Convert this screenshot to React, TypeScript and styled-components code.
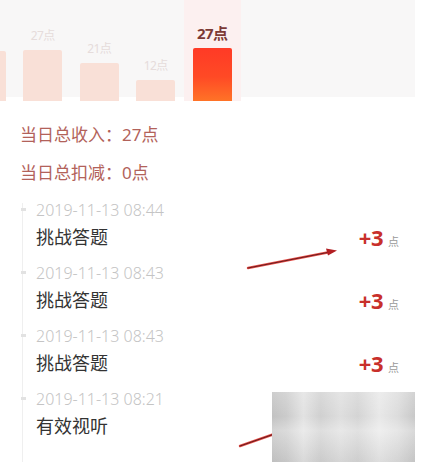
import React from 'react';
import styled, { createGlobalStyle } from 'styled-components';

const GlobalStyle = createGlobalStyle`
  body {
    margin: 0;
    background: #fff;
    font-family: 'Noto Sans', 'Noto Sans CJK SC', sans-serif;
  }
`;

const Page = styled.div`
  position: relative;
  width: 422px;
  height: 462px;
  overflow: hidden;
  background: #fff;
`;

const Chart = styled.div`
  display: flex;
  align-items: stretch;
  width: 457px;
  height: 101px;
  margin-left: -42px;
  background: linear-gradient(#f8f7f7 97px, #fff 97px);
`;

const Column = styled.div<{ $active?: boolean }>`
  width: 56.5px;
  flex: none;
  display: flex;
  flex-direction: column;
  align-items: center;
  justify-content: flex-end;
  background: ${(p) => (p.$active ? '#fcf0f0' : 'transparent')};
`;

const BarLabel = styled.div<{ $active?: boolean }>`
  font-size: ${(p) => (p.$active ? '15px' : '12px')};
  font-weight: ${(p) => (p.$active ? 700 : 400)};
  line-height: 16px;
  color: ${(p) => (p.$active ? '#7c3a36' : '#e6dcdb')};
  margin-bottom: ${(p) => (p.$active ? '7px' : '6px')};
  letter-spacing: -0.5px;
`;

const Bar = styled.div<{ $active?: boolean }>`
  width: 39px;
  border-radius: 2px 2px 0 0;
  background: ${(p) =>
    p.$active ? 'linear-gradient(#ff3a26, #ff4a25 55%, #ff7327)' : '#f9e0d7'};
`;

const Summary = styled.div`
  display: flex;
  flex-direction: column;
  gap: 15px;
  padding: 22px 0 0 20px;
`;

const SummaryLine = styled.div`
  font-size: 17px;
  line-height: 23px;
  color: #b2625a;
`;

const Timeline = styled.div`
  margin: 19px 0 0 22px;
  border-left: 1px solid #efefef;
  height: 260px;
`;

const Entry = styled.div`
  position: relative;
  display: flex;
  align-items: flex-start;
  justify-content: space-between;
  height: 63px;
  padding: 0 23px 0 13px;
  box-sizing: border-box;

  &::before {
    content: '';
    position: absolute;
    left: -2px;
    top: 5px;
    width: 5px;
    height: 3px;
    background: #e2e2e2;
  }
`;

const EntryText = styled.div`
  display: flex;
  flex-direction: column;
`;

const Stamp = styled.div`
  font-size: 16px;
  line-height: 18px;
  font-weight: 300;
  color: #c4c4c4;
  margin-top: -2px;
`;

const Title = styled.div`
  font-size: 18px;
  line-height: 24px;
  color: #333;
  margin-top: 6px;
`;

const Points = styled.div`
  display: flex;
  align-items: baseline;
  margin-top: 20px;
  line-height: 28px;
`;

const PointValue = styled.span`
  font-size: 22px;
  font-weight: 700;
  color: #c8302b;
  letter-spacing: -0.5px;
`;

const PointUnit = styled.span`
  font-size: 11px;
  color: #9a9a9a;
  margin-left: 5px;
`;

const Annotations = styled.svg`
  position: absolute;
  left: 0;
  top: 0;
  pointer-events: none;
`;

const Blur = styled.div`
  position: absolute;
  left: 272px;
  top: 392px;
  width: 143px;
  height: 70px;
  background:
    linear-gradient(180deg, rgba(255,255,255,0.2), rgba(255,255,255,0) 35%, rgba(255,255,255,0.3) 55%, rgba(180,180,180,0.2)),
    linear-gradient(90deg, #c2c2c2 0%, #cbcbcb 10%, #e2e2e2 22%, #d0d0d0 34%, #dedede 48%, #d4d4d4 60%, #e8e8e8 75%, #dcdcdc 88%, #c8c8c8 100%);
`;

const bars = [
  { label: '', h: 50 },
  { label: '27点', h: 51 },
  { label: '21点', h: 38 },
  { label: '12点', h: 21 },
  { label: '27点', h: 53, active: true },
  { label: '', h: 0 },
  { label: '', h: 0 },
  { label: '', h: 0 },
];

const entries = [
  { time: '2019-11-13 08:44', title: '挑战答题', pts: '+3' },
  { time: '2019-11-13 08:43', title: '挑战答题', pts: '+3' },
  { time: '2019-11-13 08:43', title: '挑战答题', pts: '+3' },
  { time: '2019-11-13 08:21', title: '有效视听', pts: '' },
];

export default function App() {
  return (
    <Page>
      <GlobalStyle />
      <Chart>
        {bars.map((b, i) => (
          <Column key={i} $active={b.active}>
            {b.label && <BarLabel $active={b.active}>{b.label}</BarLabel>}
            {b.h > 0 && <Bar $active={b.active} style={{ height: b.h }} />}
          </Column>
        ))}
      </Chart>
      <Summary>
        <SummaryLine>当日总收入：27点</SummaryLine>
        <SummaryLine>当日总扣减：0点</SummaryLine>
      </Summary>
      <Timeline>
        {entries.map((e, i) => (
          <Entry key={i}>
            <EntryText>
              <Stamp>{e.time}</Stamp>
              <Title>{e.title}</Title>
            </EntryText>
            {e.pts && (
              <Points>
                <PointValue>{e.pts}</PointValue>
                <PointUnit>点</PointUnit>
              </Points>
            )}
          </Entry>
        ))}
      </Timeline>
      <Annotations width="422" height="462" viewBox="0 0 422 462">
        <line x1="248" y1="268" x2="330" y2="252" stroke="#e8504a" strokeWidth="2.4" strokeLinecap="round" />
        <line x1="248" y1="268" x2="330" y2="252" stroke="#6a1a1c" strokeWidth="1.2" strokeLinecap="round" />
        <path d="M337 250.5 L326 248.5 L328 255.5 Z" fill="#b21e22" />
        <line x1="240" y1="446" x2="280" y2="432" stroke="#e8504a" strokeWidth="2.4" strokeLinecap="round" />
        <line x1="240" y1="446" x2="280" y2="432" stroke="#6a1a1c" strokeWidth="1.2" strokeLinecap="round" />
      </Annotations>
      <Blur />
    </Page>
  );
}
